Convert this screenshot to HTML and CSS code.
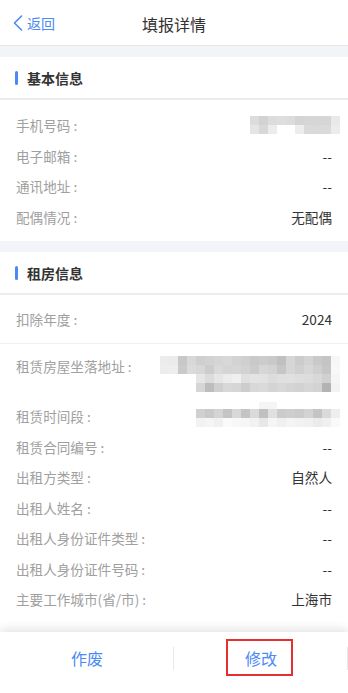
FILE: index.html
```html
<!DOCTYPE html>
<html lang="zh-CN">
<head>
<meta charset="utf-8">
<meta name="viewport" content="width=device-width, initial-scale=1">
<title>填报详情</title>
<link rel="stylesheet" href="styles.css">
</head>
<body>
<div class="page">
  <header class="nav">
    <a class="back">
      <svg class="back-icon" width="10" height="16" viewBox="0 0 10 16"><path d="M8.5 1 L1.5 8 L8.5 15" fill="none" stroke="#4a8af4" stroke-width="1.6" stroke-linecap="round" stroke-linejoin="round"/></svg>
      <span>返回</span>
    </a>
    <h1 class="nav-title">填报详情</h1>
  </header>

  <main class="content">
    <div class="gap"></div>
    <section class="card">
      <div class="sec-head"><i class="sec-bar"></i><span>基本信息</span></div>
      <div class="group group-basic">
        <div class="row"><span class="label">手机号码<span class="colon">:</span></span><span class="mosaic mosaic-phone"></span></div>
        <div class="row"><span class="label">电子邮箱<span class="colon">:</span></span><span class="value">--</span></div>
        <div class="row"><span class="label">通讯地址<span class="colon">:</span></span><span class="value">--</span></div>
        <div class="row"><span class="label">配偶情况<span class="colon">:</span></span><span class="value">无配偶</span></div>
      </div>
    </section>
    <div class="gap"></div>
    <section class="card card-fill">
      <div class="sec-head"><i class="sec-bar"></i><span>租房信息</span></div>
      <div class="row row-year"><span class="label">扣除年度<span class="colon">:</span></span><span class="value">2024</span></div>
      <div class="group group-rent">
        <div class="row row-address"><span class="label">租赁房屋坐落地址<span class="colon">:</span></span><span class="mosaic mosaic-address"></span></div>
        <div class="row row-period"><span class="label">租赁时间段<span class="colon">:</span></span><span class="mosaic mosaic-period"></span></div>
        <div class="row"><span class="label">租赁合同编号<span class="colon">:</span></span><span class="value">--</span></div>
        <div class="row"><span class="label">出租方类型<span class="colon">:</span></span><span class="value">自然人</span></div>
        <div class="row"><span class="label">出租人姓名<span class="colon">:</span></span><span class="value">--</span></div>
        <div class="row"><span class="label">出租人身份证件类型<span class="colon">:</span></span><span class="value">--</span></div>
        <div class="row"><span class="label">出租人身份证件号码<span class="colon">:</span></span><span class="value">--</span></div>
        <div class="row"><span class="label">主要工作城市(省/市)<span class="colon">:</span></span><span class="value">上海市</span></div>
      </div>
    </section>
  </main>

  <footer class="footer">
    <button class="btn">作废</button>
    <button class="btn btn-edit">修改<span class="mark"></span></button>
  </footer>
</div>
</body>
</html>
```

FILE: styles.css
```css
* { box-sizing: border-box; }
html, body { margin: 0; padding: 0; }
body {
  font-family: "Noto Sans CJK SC", "Noto Sans", sans-serif;
  color: #333;
  background: #fff;
}
.page {
  height: 100vh;
  display: flex;
  flex-direction: column;
  overflow: hidden;
}
.nav {
  height: 46px;
  flex: none;
  border-bottom: 1px solid #e6e6e9;
  display: flex;
  align-items: center;
  justify-content: center;
  position: relative;
  background: #fff;
}
.back {
  position: absolute;
  left: 13px;
  top: 0;
  height: 45px;
  display: flex;
  align-items: center;
  color: #4a8af4;
  font-size: 14px;
  gap: 4px;
}
.back-icon { display: block; margin-top: 1px; }
.nav-title {
  margin: 0;
  font-size: 16px;
  font-weight: 400;
  color: #333;
  line-height: 22px;
  margin-top: 2px;
}
.content {
  flex: 1;
  display: flex;
  flex-direction: column;
  background: #fff;
  overflow: hidden;
}
.gap {
  height: 11px;
  flex: none;
  background: #f3f4f8;
}
.card { background: #fff; }
.card-fill { flex: 1; }
.sec-head {
  height: 43px;
  border-bottom: 2px solid #ebecef;
  display: flex;
  align-items: center;
  padding-left: 15px;
  font-size: 14px;
  font-weight: 700;
  color: #333;
}
.sec-bar {
  display: block;
  width: 3px;
  height: 14px;
  border-radius: 2px;
  background: #4a8af4;
  margin-right: 9px;
}
.group-basic { padding: 10px 0 9px; }
.row {
  height: 30.5px;
  display: flex;
  align-items: center;
  justify-content: space-between;
  padding: 0 16px;
  font-size: 13.6px;
  line-height: 20px;
}
.label { color: #a0a0a0; }
.colon { margin-left: 3px; }
.value { color: #333; }
.row-year {
  height: 49px;
  border-bottom: 1px solid #efeff1;
}
.group-rent { padding-top: 6.5px; }
.row-address {
  height: 50.5px;
  align-items: flex-start;
}
.row-address .label { margin-top: 5.2px; }
.row-period { align-items: center; }

.mosaic {
  display: block;
  flex: none;
  margin-right: -8px;
  background-repeat: no-repeat;
}
.mosaic-phone {
  width: 90px;
  height: 18px;
  background:
    linear-gradient(to right, #dcdcdc 0 9px, #d2d2d2 9px 18px, #dcdcdc 18px 27px, #dedede 27px 36px, #dcdcdc 36px 45px, #d4d4d4 45px 54px, #d6d6d6 54px 63px, #d6d6d6 63px 72px, #d6d6d6 72px 81px, #e9e9e9 81px 90px) 0 0 / 100% 9px no-repeat,
    linear-gradient(to right, #e5e5e5 0 9px, #d8d8d8 9px 18px, #ececec 18px 27px, #ffffff 27px 36px, #ffffff 36px 45px, #ededed 45px 54px, #dadada 54px 63px, #d9d9d9 63px 72px, #dadada 72px 81px, #ececec 81px 90px) 0 9px / 100% 9px no-repeat;
}
.mosaic-address {
  width: 180px;
  height: 36px;
  margin-top: 5.5px;
  background:
    linear-gradient(to right, #ececec 0 9px, #ebebeb 9px 18px, #c8c8c8 18px 27px, #d8d8d8 27px 36px, #cfcfcf 36px 45px, #d2d2d2 45px 54px, #d5d5d5 54px 63px, #d8d8d8 63px 72px, #d3d3d3 72px 81px, #cfcfcf 81px 90px, #c9c9c9 90px 99px, #cccccc 99px 108px, #c9c9c9 108px 117px, #c0c0c0 117px 126px, #d6d6d6 126px 135px, #cccccc 135px 144px, #d3d3d3 144px 153px, #c9c9c9 153px 162px, #c4c4c4 162px 171px, #f7f7f7 171px 180px) 0 0 / 100% 9px no-repeat,
    linear-gradient(to right, #ededed 0 9px, #eeeeee 9px 18px, #cacaca 18px 27px, #dbdbdb 27px 36px, #d7d7d7 36px 45px, #cccccc 45px 54px, #d9d9d9 54px 63px, #d5d5d5 63px 72px, #d6d6d6 72px 81px, #d2d2d2 81px 90px, #cbcbcb 90px 99px, #d6d6d6 99px 108px, #d3d3d3 108px 117px, #c6c6c6 117px 126px, #d6d6d6 126px 135px, #d0d0d0 135px 144px, #d7d7d7 144px 153px, #cfcfcf 153px 162px, #c6c6c6 162px 171px, #f8f8f8 171px 180px) 0 9px / 100% 9px no-repeat,
    linear-gradient(to right, transparent 0 36px, #e6e6e6 36px 45px, #dcdcdc 45px 54px, #e6e6e6 54px 63px, #ececec 63px 72px, #f0f0f0 72px 81px, #e0e0e0 81px 90px, #e3e3e3 90px 99px, #e2e2e2 99px 108px, #dcdcdc 108px 117px, #dfdfdf 117px 126px, #e0e0e0 126px 135px, #dedede 135px 144px, #dcdcdc 144px 153px, #d8d8d8 153px 162px, #d0d0d0 162px 171px, #f5f5f5 171px 180px) 0 18px / 100% 9px no-repeat,
    linear-gradient(to right, transparent 0 36px, #d6d6d6 36px 45px, #bdbdbd 45px 54px, #cfcfcf 54px 63px, #d8d8d8 63px 72px, #d6d6d6 72px 81px, #cdcdcd 81px 90px, #d8d8d8 90px 99px, #dadada 99px 108px, #d4d4d4 108px 117px, #d8d8d8 117px 126px, #d4d4d4 126px 135px, #d2d2d2 135px 144px, #d6d6d6 144px 153px, #d3d3d3 153px 162px, #b3b3b3 162px 171px, #f3f3f3 171px 180px) 0 27px / 100% 9px no-repeat;
}
.mosaic-period {
  width: 144px;
  height: 25px;
  align-self: flex-start;
  margin-top: 0.5px;
  background:
    linear-gradient(#f5f5f5, #f5f5f5) 63px 0 / 18px 7px no-repeat,
    linear-gradient(to right, #d0d0d0 0 9px, #c9c9c9 9px 18px, #d4d4d4 18px 27px, #c4c4c4 27px 36px, #d8d8d8 36px 45px, #c4c4c4 45px 54px, #dadada 54px 63px, #c0c0c0 63px 72px, #e0e0e0 72px 81px, #cbcbcb 81px 90px, #cecece 90px 99px, #cbcbcb 99px 108px, #d3d3d3 108px 117px, #c4c4c4 117px 126px, #dadada 126px 135px, #eeeeee 135px 144px) 0 7px / 100% 9px no-repeat,
    linear-gradient(to right, #f2f2f2 0 9px, #f5f5f5 9px 18px, #f0f0f0 18px 27px, #fafafa 27px 36px, #f8f8f8 36px 45px, #f6f6f6 45px 54px, #f2f2f2 54px 63px, #e8e8e8 63px 72px, #f5f5f5 72px 81px, #f0f0f0 81px 90px, #f4f4f4 90px 99px, #f2f2f2 99px 108px, #f0f0f0 108px 117px, #ebebeb 117px 126px, #f0f0f0 126px 135px, #fafafa 135px 144px) 0 16px / 100% 9px no-repeat;
}

.footer {
  height: 61px;
  flex: none;
  display: flex;
  padding-bottom: 9px;
  background: #fff;
  box-shadow: 0 -2px 10px rgba(0, 0, 0, 0.13);
  position: relative;
  z-index: 1;
}
.btn {
  flex: 1;
  position: relative;
  border: 0;
  background: transparent;
  font-family: inherit;
  font-size: 16px;
  color: #4a8af4;
  padding: 0;
  display: flex;
  align-items: center;
  justify-content: center;
}
.btn::after {
  content: "";
  position: absolute;
  right: 0;
  top: 15px;
  width: 1px;
  height: 23px;
  background: #e8e8ea;
}
.mark {
  position: absolute;
  left: 52px;
  top: 7px;
  width: 67px;
  height: 37px;
  border: 2px solid #e5302f;
}
```
